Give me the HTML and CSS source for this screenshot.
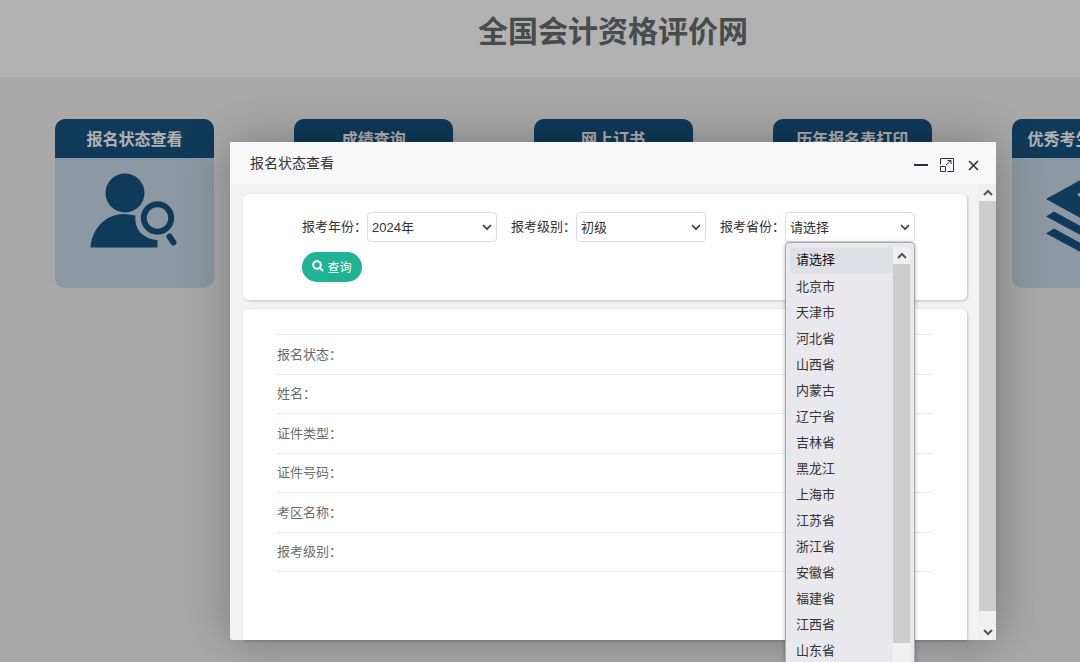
FILE: index.html
```html
<!DOCTYPE html>
<html lang="zh-CN">
<head>
<meta charset="utf-8">
<title>全国会计资格评价网</title>
<link rel="stylesheet" href="styles.css">
</head>
<body>
<div class="stage">
  <header class="site-header"><h1 class="site-title">全国会计资格评价网</h1></header>
  <main class="cards">
    <a class="card" href="#status">
      <h2 class="card-title">报名状态查看</h2>
      <svg class="card-icon" viewBox="0 0 159 130" aria-hidden="true">
        <circle cx="70" cy="35" r="19.5"/>
        <path d="M35.500 89.500C37 71 50 56 69 56Q75 56 80.500 57.500C79 71 88 81 102.500 82V89.500Z"/>
        <circle class="line" cx="102.500" cy="60" r="13.700" stroke-width="6"/>
        <path class="line" d="M114.500 78.500L118.500 84.500" stroke-width="6"/>
      </svg>
    </a>
    <a class="card" href="#score"><h2 class="card-title">成绩查询</h2></a>
    <a class="card" href="#books"><h2 class="card-title">网上订书</h2></a>
    <a class="card" href="#forms"><h2 class="card-title">历年报名表打印</h2></a>
    <a class="card" href="#honors">
      <h2 class="card-title">优秀考生证书打印</h2>
      <svg class="card-icon" viewBox="0 0 159 130" aria-hidden="true">
        <path d="M34 41L79.500 16L125 41L79.500 66Z"/>
        <path d="M34 58.500L42 53.500L79.500 74L117 53.500L125 58.500L79.500 83Z"/>
        <path d="M34 75.500L42 70.500L79.500 91L117 70.500L125 75.500L79.500 100Z"/>
        <path class="mark" d="M66 36L79 43L94 33"/>
      </svg>
    </a>
  </main>

  <div class="shade">
    <section class="dialog" role="dialog" aria-labelledby="dialog-title">
      <div class="dialog-head">
        <h2 class="dialog-title" id="dialog-title">报名状态查看</h2>
        <div class="window-tools">
          <button class="tool" type="button" aria-label="最小化"><svg viewBox="0 0 16 16"><path d="M1 8H15" stroke-width="2"/></svg></button>
          <button class="tool" type="button" aria-label="最大化"><svg viewBox="0 0 16 16"><path d="M1.500 7.500V1.500H14.500V14.500H8.500M1.500 9.500H6.500V14.500H1.500ZM7 8L12 3.500M8.500 3.500H12V7"/></svg></button>
          <button class="tool" type="button" aria-label="关闭"><svg viewBox="0 0 16 16"><path d="M4 4L13 13M13 4L4 13" stroke-width="1.600"/></svg></button>
        </div>
      </div>
      <div class="dialog-body">
        <div class="content">
          <form class="panel search">
            <div class="field">
              <label for="year">报考年份：</label>
              <div class="select-box">
                <select id="year"><option>2024年</option></select>
                <svg class="chevron" viewBox="0 0 10 10"><path d="M1 3L5 7L9 3"/></svg>
              </div>
            </div>
            <div class="field">
              <label for="level">报考级别：</label>
              <div class="select-box">
                <select id="level"><option>初级</option></select>
                <svg class="chevron" viewBox="0 0 10 10"><path d="M1 3L5 7L9 3"/></svg>
              </div>
            </div>
            <div class="field">
              <label for="province">报考省份：</label>
              <div class="select-box">
                <select id="province"><option>请选择</option></select>
                <svg class="chevron" viewBox="0 0 10 10"><path d="M1 3L5 7L9 3"/></svg>
                <div class="menu">
                  <ul class="options" role="listbox" aria-label="报考省份">
                    <li class="option current" role="option" aria-selected="true">请选择</li>
                    <li class="option" role="option">北京市</li>
                    <li class="option" role="option">天津市</li>
                    <li class="option" role="option">河北省</li>
                    <li class="option" role="option">山西省</li>
                    <li class="option" role="option">内蒙古</li>
                    <li class="option" role="option">辽宁省</li>
                    <li class="option" role="option">吉林省</li>
                    <li class="option" role="option">黑龙江</li>
                    <li class="option" role="option">上海市</li>
                    <li class="option" role="option">江苏省</li>
                    <li class="option" role="option">浙江省</li>
                    <li class="option" role="option">安徽省</li>
                    <li class="option" role="option">福建省</li>
                    <li class="option" role="option">江西省</li>
                    <li class="option" role="option">山东省</li>
                  </ul>
                  <div class="scrollbar" aria-hidden="true">
                    <span class="arrow"><svg viewBox="0 0 10 10"><path d="M1 7L5 3L9 7"/></svg></span>
                    <span class="thumb menu-thumb"></span>
                  </div>
                </div>
              </div>
            </div>
            <button class="submit" type="button">
              <svg viewBox="0 0 12 12" aria-hidden="true"><circle cx="5" cy="5" r="3.800"/><path d="M8 8L11 11"/></svg>查询
            </button>
          </form>
          <div class="panel result">
            <dl class="details">
              <div class="row"><dt>报名状态：</dt><dd></dd></div>
              <div class="row"><dt>姓名：</dt><dd></dd></div>
              <div class="row"><dt>证件类型：</dt><dd></dd></div>
              <div class="row"><dt>证件号码：</dt><dd></dd></div>
              <div class="row"><dt>考区名称：</dt><dd></dd></div>
              <div class="row"><dt>报考级别：</dt><dd></dd></div>
            </dl>
          </div>
        </div>
        <div class="scrollbar" aria-hidden="true">
          <span class="arrow"><svg viewBox="0 0 10 10"><path d="M1 7L5 3L9 7"/></svg></span>
          <span class="thumb page-thumb"></span>
          <span class="arrow"><svg viewBox="0 0 10 10"><path d="M1 3L5 7L9 3"/></svg></span>
        </div>
      </div>
    </section>
  </div>
</div>
</body>
</html>
```
FILE: styles.css
```css
* {
  box-sizing: border-box;
}

body {
  margin: 0;
  overflow: hidden;
  background: #f3f3f3;
  font-family: "Liberation Sans", "Noto Sans CJK SC", sans-serif;
  font-size: 13px;
  color: #333;
}

h1, h2, ul, dl, dd {
  margin: 0;
  padding: 0;
}

button, select {
  font: inherit;
  color: inherit;
}

svg {
  display: block;
  fill: none;
  stroke: currentColor;
}

.stage {
  position: relative;
  min-width: 1226px;
  min-height: 100vh;
}

.site-header {
  height: 78px;
  padding-top: 10px;
  background: #fff;
  border-bottom: 1px solid #efefef;
}

.site-title {
  font-size: 30px;
  line-height: 44px;
  text-align: center;
  color: #696d6e;
}

.cards {
  display: flex;
  justify-content: space-between;
  padding: 41px 55px 0;
}

.card {
  width: 159px;
  height: 169px;
  overflow: hidden;
  border-radius: 10px;
  background: #cbdce8;
  color: #185482;
  text-decoration: none;
}

.card-title {
  height: 39px;
  font-size: 16px;
  line-height: 42px;
  text-align: center;
  white-space: nowrap;
  background: #185482;
  color: #fff;
}

.card-icon {
  width: 100%;
  fill: currentColor;
  stroke: none;
}

.card-icon .line {
  fill: none;
  stroke: currentColor;
  stroke-linecap: round;
}

.card-icon .mark {
  fill: none;
  stroke: #cbdce8;
  stroke-width: 3;
}

/* Modal layer over the page */
.shade {
  position: absolute;
  inset: 0;
  display: flex;
  justify-content: center;
  padding: 142px 0 22px;
  background: rgba(0, 0, 0, 0.3);
}

.dialog {
  display: flex;
  flex-direction: column;
  width: 766px;
  border-radius: 2px;
  background: #f2f2f2;
  box-shadow: 1px 1px 50px rgba(0, 0, 0, 0.3);
}

.dialog-head {
  display: flex;
  justify-content: space-between;
  align-items: center;
  height: 42px;
  padding: 0 15px 0 20px;
  background: #f8f8f8;
}

.dialog-title {
  padding-bottom: 2px;
  font-size: 14px;
  font-weight: 400;
}

.window-tools {
  display: flex;
  gap: 10px;
  padding-top: 4px;
}

.tool {
  width: 16px;
  height: 16px;
  padding: 0;
  border: 0;
  background: none;
  color: #2e2d3c;
}

.dialog-body {
  display: flex;
  flex: 1;
}

.content {
  display: flex;
  flex: 1;
  flex-direction: column;
  gap: 9px;
  padding: 10px 12px 0 13px;
}

.panel {
  border-radius: 6px;
  background: #fff;
  box-shadow: 1px 1px 3px rgba(0, 0, 0, 0.2);
}

.search {
  display: flex;
  flex-wrap: wrap;
  gap: 10px 14px;
  padding: 18px 50px 18px 59px;
}

.field {
  display: flex;
  align-items: center;
}

.field label {
  padding-bottom: 3px;
}

.select-box {
  position: relative;
}

.select-box select {
  display: block;
  width: 130px;
  height: 30px;
  padding: 0 4px;
  border: 1px solid #ddd;
  border-radius: 4px;
  background: #fff;
  appearance: none;
}

.chevron {
  position: absolute;
  top: 10px;
  right: 5px;
  width: 10px;
  stroke-width: 1.6;
  pointer-events: none;
}

.menu {
  position: absolute;
  z-index: 2;
  top: 30px;
  left: 0;
  display: flex;
  width: 130px;
  padding: 4px;
  border: 1px solid #a9a9ad;
  border-radius: 4px;
  background: #e8e8ed;
  box-shadow: 0 1px 4px rgba(0, 0, 0, 0.3);
}

.options {
  flex: 1;
  list-style: none;
}

.option {
  height: 26px;
  padding-left: 6px;
  line-height: 26px;
}

.current {
  margin-bottom: 1px;
  border-radius: 2px;
  background: #dfdfe6;
  color: #111;
}

.scrollbar {
  display: flex;
  flex-direction: column;
  width: 17px;
  background: #f0f0f0;
  color: #555;
}

.arrow {
  display: grid;
  place-items: center;
  height: 17px;
}

.arrow svg {
  width: 10px;
  stroke-width: 2;
}

.thumb {
  background: #cdcdcd;
}

.menu-thumb {
  height: 379px;
}

.page-thumb {
  flex: 1;
  margin-bottom: 12px;
}

.submit {
  display: flex;
  align-items: center;
  justify-content: center;
  gap: 3px;
  width: 60px;
  height: 30px;
  padding: 0 0 2px;
  border: 0;
  border-radius: 15px;
  background: #1fb295;
  color: #fff;
  font-size: 12px;
}

.submit svg {
  width: 12px;
  stroke-width: 2;
}

.result {
  flex: 1;
  padding: 25px 35px 0 34px;
  border-radius: 6px 6px 0 0;
}

.details {
  display: flex;
  flex-direction: column;
  height: 238px;
  border-top: 1px solid #e9ebeb;
  color: #6b6b6b;
}

.row {
  display: flex;
  flex: 1;
  align-items: center;
  padding-bottom: 2px;
  border-bottom: 1px solid #e9ebeb;
}
```
